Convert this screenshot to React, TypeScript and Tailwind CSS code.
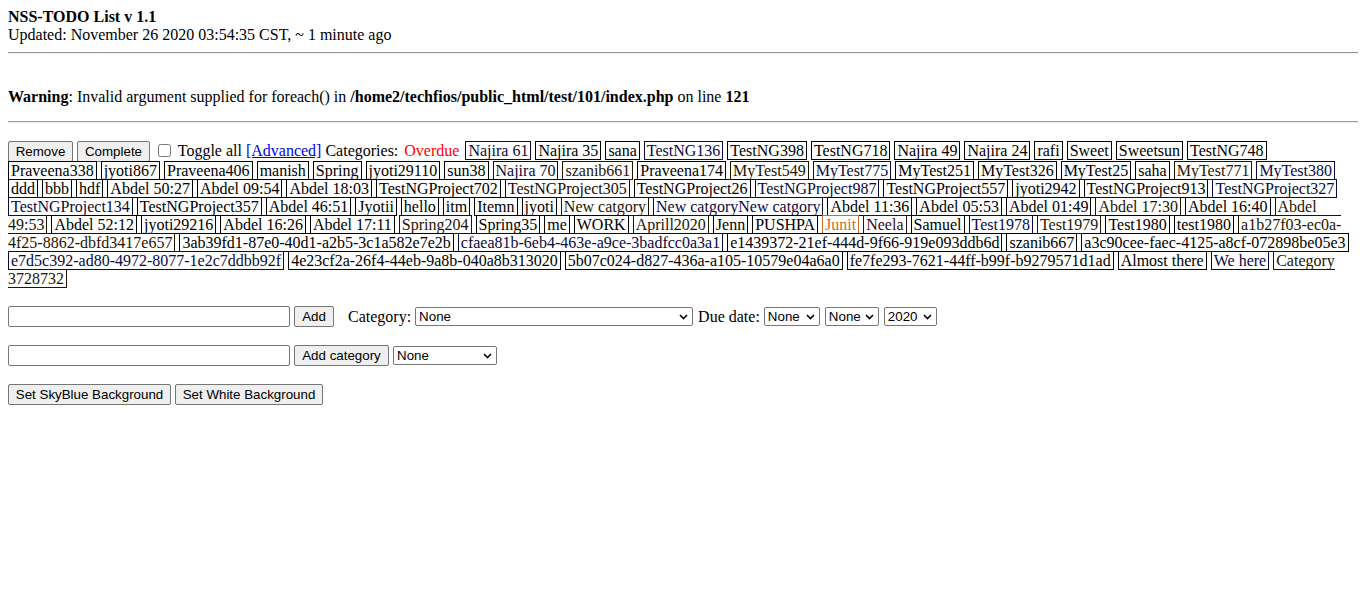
import React from 'react';

interface Tag {
  name: string;
  tone?: string;
}

const tags: Tag[] = [
  { name: 'Najira 61', tone: 'text-[#0a0a3c]' },
  { name: 'Najira 35' },
  { name: 'sana' },
  { name: 'TestNG136', tone: 'text-[#0a0a46]' },
  { name: 'TestNG398' },
  { name: 'TestNG718' },
  { name: 'Najira 49' },
  { name: 'Najira 24' },
  { name: 'rafi' },
  { name: 'Sweet' },
  { name: 'Sweetsun' },
  { name: 'TestNG748' },
  { name: 'Praveena338' },
  { name: 'jyoti867' },
  { name: 'Praveena406' },
  { name: 'manish' },
  { name: 'Spring' },
  { name: 'jyoti29110' },
  { name: 'sun38' },
  { name: 'Najira 70', tone: 'text-[#0a0a3c]' },
  { name: 'szanib661', tone: 'text-[#2a1400]' },
  { name: 'Praveena174' },
  { name: 'MyTest549', tone: 'text-[#1e1400]' },
  { name: 'MyTest775', tone: 'text-[#0a0a3c]' },
  { name: 'MyTest251' },
  { name: 'MyTest326' },
  { name: 'MyTest25' },
  { name: 'saha' },
  { name: 'MyTest771', tone: 'text-[#2a1400]' },
  { name: 'MyTest380', tone: 'text-[#0a0a3c]' },
  { name: 'ddd' },
  { name: 'bbb' },
  { name: 'hdf' },
  { name: 'Abdel 50:27' },
  { name: 'Abdel 09:54' },
  { name: 'Abdel 18:03' },
  { name: 'TestNGProject702' },
  { name: 'TestNGProject305', tone: 'text-[#1e0a00]' },
  { name: 'TestNGProject26' },
  { name: 'TestNGProject987', tone: 'text-[#0a0a3c]' },
  { name: 'TestNGProject557' },
  { name: 'jyoti2942' },
  { name: 'TestNGProject913' },
  { name: 'TestNGProject327', tone: 'text-[#0a0a3c]' },
  { name: 'TestNGProject134', tone: 'text-[#0a0a3c]' },
  { name: 'TestNGProject357' },
  { name: 'Abdel 46:51' },
  { name: 'Jyotii' },
  { name: 'hello' },
  { name: 'itm' },
  { name: 'Itemn' },
  { name: 'jyoti' },
  { name: 'New catgory', tone: 'text-[#1e1400]' },
  { name: 'New catgoryNew catgory', tone: 'text-[#0a0a3c]' },
  { name: 'Abdel 11:36' },
  { name: 'Abdel 05:53' },
  { name: 'Abdel 01:49' },
  { name: 'Abdel 17:30', tone: 'text-[#1e1400]' },
  { name: 'Abdel 16:40' },
  { name: 'Abdel 49:53', tone: 'text-[#1e1400]' },
  { name: 'Abdel 52:12' },
  { name: 'jyoti29216' },
  { name: 'Abdel 16:26' },
  { name: 'Abdel 17:11' },
  { name: 'Spring204', tone: 'text-[#1e1400]' },
  { name: 'Spring35' },
  { name: 'me' },
  { name: 'WORK' },
  { name: 'Aprill2020', tone: 'text-[#1e1400]' },
  { name: 'Jenn' },
  { name: 'PUSHPA' },
  { name: 'Junit', tone: 'text-[#c86e28]' },
  { name: 'Neela', tone: 'text-[#3c0a14]' },
  { name: 'Samuel' },
  { name: 'Test1978', tone: 'text-[#0a0a46]' },
  { name: 'Test1979', tone: 'text-[#2a1400]' },
  { name: 'Test1980' },
  { name: 'test1980' },
  { name: 'a1b27f03-ec0a-4f25-8862-dbfd3417e657', tone: 'text-[#1e1400]' },
  { name: '3ab39fd1-87e0-40d1-a2b5-3c1a582e7e2b' },
  { name: 'cfaea81b-6eb4-463e-a9ce-3badfcc0a3a1', tone: 'text-[#0a0a3c]' },
  { name: 'e1439372-21ef-444d-9f66-919e093ddb6d' },
  { name: 'szanib667' },
  { name: 'a3c90cee-faec-4125-a8cf-072898be05e3' },
  { name: 'e7d5c392-ad80-4972-8077-1e2c7ddbb92f', tone: 'text-[#0a0a3c]' },
  { name: '4e23cf2a-26f4-44eb-9a8b-040a8b313020' },
  { name: '5b07c024-d827-436a-a105-10579e04a6a0' },
  { name: 'fe7fe293-7621-44ff-b99f-b9279571d1ad' },
  { name: 'Almost there' },
  { name: 'We here', tone: 'text-[#0a0a3c]' },
  { name: 'Category 3728732', tone: 'text-[#1e1400]' },
];

const Button: React.FC<{ label: string; className?: string }> = ({ label, className = '' }) => (
  <button
    type="button"
    className={`inline-block h-[21px] rounded-[2px] border border-[#767676] bg-[#efefef] px-[6px] align-baseline font-['Liberation_Sans',Arial,sans-serif] text-[13.33px] leading-[normal] text-black ${className}`}
  >
    {label}
  </button>
);

const Select: React.FC<{ value: string; width: string; className?: string }> = ({
  value,
  width,
  className = '',
}) => (
  <span className={`relative inline-flex ${width} ${className}`}>
    <select className="h-[19px] w-full appearance-none rounded-[2px] border border-[#767676] bg-white pl-[3px] font-['Liberation_Sans',Arial,sans-serif] text-[13.33px] leading-[normal] text-black">
      <option>{value}</option>
    </select>
    <svg
      className="pointer-events-none absolute right-[5px] top-[7px]"
      width="9"
      height="6"
      viewBox="0 0 9 6"
    >
      <path d="M1 1l3.5 3.5L8 1" fill="none" stroke="#000" strokeWidth="1.6" />
    </svg>
  </span>
);

const TextInput: React.FC = () => (
  <input
    type="text"
    className="h-[21px] w-[282px] rounded-[2px] border border-[#767676] bg-white px-[2px] font-['Liberation_Sans',Arial,sans-serif] text-[13.33px]"
  />
);

export default function App() {
  return (
    <div className="min-h-screen bg-white p-2 font-['Liberation_Serif','Times_New_Roman',serif] text-[16px] leading-[normal] text-black">
      <b>NSS-TODO List v 1.1</b>
      <div>Updated: November 26 2020 03:54:35 CST, ~ 1 minute ago</div>
      <hr className="mt-2 border-t border-b border-t-[#9a9a9a] border-b-[#eeeeee]" />

      <div className="mt-[34px]">
        <b>Warning</b>: Invalid argument supplied for foreach() in{' '}
        <b>/home2/techfios/public_html/test/101/index.php</b> on line <b>121</b>
      </div>
      <hr className="mt-[15px] border-t border-b border-t-[#9a9a9a] border-b-[#eeeeee]" />

      <div className="mt-[18px]">
        <Button label="Remove" className="w-[65px]" /> <Button label="Complete" className="w-[73px]" />{' '}
        <input type="checkbox" className="m-[3px_3px_3px_4px] h-[13px] w-[13px] align-[-1px]" />{' '}
        Toggle all <a className="text-[#0000ee] underline">[Advanced]</a> Categories:{' '}
        <span className="border border-transparent px-px text-[#ff0000]">Overdue</span>{' '}
        {tags.map((t) => (
          <React.Fragment key={t.name}>
            <span className={`border border-current px-[2px] ${t.tone ?? 'text-black'}`}>{t.name}</span>{' '}
          </React.Fragment>
        ))}
      </div>

      <div className="mt-[18px] flex h-[21px] items-center">
        <TextInput />
        <Button label="Add" className="ml-[4px] w-[40px]" />
        <span className="ml-[14px]">Category:</span>
        <Select value="None" width="w-[278px]" className="ml-[4px]" />
        <span className="ml-[5px]">Due date:</span>
        <Select value="None" width="w-[56px]" className="ml-[4px]" />
        <Select value="None" width="w-[54px]" className="ml-[5px]" />
        <Select value="2020" width="w-[53px]" className="ml-[5px]" />
      </div>

      <div className="mt-[18px] flex h-[21px] items-center">
        <TextInput />
        <Button label="Add category" className="ml-[4px] w-[95px]" />
        <Select value="None" width="w-[104px]" className="ml-[4px]" />
      </div>

      <div className="mt-[18px] flex h-[21px] items-center">
        <Button label="Set SkyBlue Background" className="w-[163px]" />
        <Button label="Set White Background" className="ml-[4px] w-[148px]" />
      </div>
    </div>
  );
}
